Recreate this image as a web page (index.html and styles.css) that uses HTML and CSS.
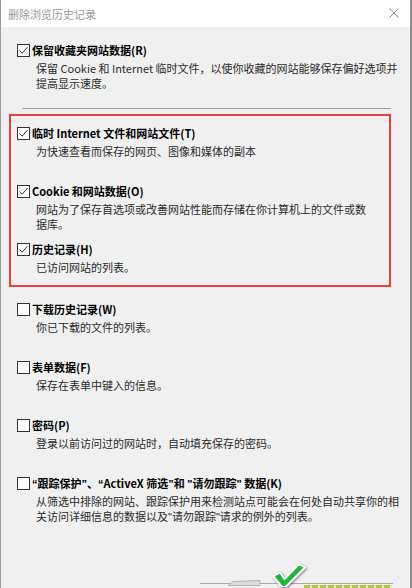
FILE: index.html
```html
<!DOCTYPE html>
<html lang="zh-CN">
<head>
<meta charset="utf-8">
<title>删除浏览历史记录</title>
<link rel="stylesheet" href="styles.css">
</head>
<body>
<div class="window">
  <div class="titlebar">
    <span class="title">删除浏览历史记录</span>
    <svg class="close" width="10" height="10" viewBox="0 0 10 10"><path d="M0.5 0.5 L9.5 9.5 M9.5 0.5 L0.5 9.5" stroke="#8a8a8a" stroke-width="1" fill="none"/></svg>
  </div>
  <div class="content">
    <div class="item first">
      <div class="label-row"><svg class="cb" width="13" height="13" viewBox="0 0 13 13"><rect x="0.5" y="0.5" width="12" height="12" fill="#fff" stroke="#333"/><path d="M2.6 6.4 L5.2 9.2 L10.4 3.2" stroke="#333" stroke-width="1" fill="none"/></svg><span class="label">保留收藏夹网站数据(R)</span></div>
      <div class="desc">保留 Cookie 和 Internet 临时文件，以使你收藏的网站能够保存偏好选项并<br>提高显示速度。</div>
    </div>
    <div class="sep"></div>
    <div class="highlight">
      <div class="item">
        <div class="label-row"><svg class="cb" width="13" height="13" viewBox="0 0 13 13"><rect x="0.5" y="0.5" width="12" height="12" fill="#fff" stroke="#333"/><path d="M2.6 6.4 L5.2 9.2 L10.4 3.2" stroke="#333" stroke-width="1" fill="none"/></svg><span class="label">临时 Internet 文件和网站文件(T)</span></div>
        <div class="desc">为快速查看而保存的网页、图像和媒体的副本</div>
      </div>
      <div class="item">
        <div class="label-row"><svg class="cb" width="13" height="13" viewBox="0 0 13 13"><rect x="0.5" y="0.5" width="12" height="12" fill="#fff" stroke="#333"/><path d="M2.6 6.4 L5.2 9.2 L10.4 3.2" stroke="#333" stroke-width="1" fill="none"/></svg><span class="label">Cookie 和网站数据(O)</span></div>
        <div class="desc">网站为了保存首选项或改善网站性能而存储在你计算机上的文件或数<br>据库。</div>
      </div>
      <div class="item auto">
        <div class="label-row"><svg class="cb" width="13" height="13" viewBox="0 0 13 13"><rect x="0.5" y="0.5" width="12" height="12" fill="#fff" stroke="#333"/><path d="M2.6 6.4 L5.2 9.2 L10.4 3.2" stroke="#333" stroke-width="1" fill="none"/></svg><span class="label">历史记录(H)</span></div>
        <div class="desc">已访问网站的列表。</div>
      </div>
    </div>
    <div class="item after-box">
      <div class="label-row"><svg class="cb" width="13" height="13" viewBox="0 0 13 13"><rect x="0.5" y="0.5" width="12" height="12" fill="#fff" stroke="#333"/></svg><span class="label">下载历史记录(W)</span></div>
      <div class="desc">你已下载的文件的列表。</div>
    </div>
    <div class="item">
      <div class="label-row"><svg class="cb" width="13" height="13" viewBox="0 0 13 13"><rect x="0.5" y="0.5" width="12" height="12" fill="#fff" stroke="#333"/></svg><span class="label">表单数据(F)</span></div>
      <div class="desc">保存在表单中键入的信息。</div>
    </div>
    <div class="item">
      <div class="label-row"><svg class="cb" width="13" height="13" viewBox="0 0 13 13"><rect x="0.5" y="0.5" width="12" height="12" fill="#fff" stroke="#333"/></svg><span class="label">密码(P)</span></div>
      <div class="desc">登录以前访问过的网站时，自动填充保存的密码。</div>
    </div>
    <div class="item">
      <div class="label-row"><svg class="cb" width="13" height="13" viewBox="0 0 13 13"><rect x="0.5" y="0.5" width="12" height="12" fill="#fff" stroke="#333"/></svg><span class="label"><span class="q">“</span>跟踪保护<span class="q">”</span>、<span class="q">“</span>ActiveX 筛选<span class="q">”</span>和 <span class="q">"</span>请勿跟踪<span class="q">"</span> 数据(K)</span></div>
      <div class="desc">从筛选中排除的网站、跟踪保护用来检测站点可能会在何处自动共享你的相<br>关访问详细信息的数据以及<span class="q">"</span>请勿跟踪<span class="q">"</span>请求的例外的列表。</div>
    </div>
  </div>
  <div class="footer">
    <div class="btnbar">
      <svg class="ghost" width="34" height="6" viewBox="0 0 34 6"><path d="M1 5.5 L6 1.5 L33 0.5 L33 5.5 Z" fill="#dcdcdc" stroke="#b4b4b4" stroke-width="1"/></svg>
      <span class="okband"></span>
    </div>
    <svg class="tick" width="38" height="26" viewBox="0 0 38 26"><path d="M3 15 L10 11.5 L14.5 18 L29 3 L35 6.5 L15.5 26 L12 26 Z" fill="#21b33f" stroke="#fff" stroke-width="2" stroke-linejoin="round"/></svg>
  </div>
</div>
</body>
</html>
```
FILE: styles.css
```css
html, body {
  margin: 0;
  padding: 0;
}
body {
  width: 412px;
  height: 588px;
  overflow: hidden;
  background: #f0f0f0;
  font-family: "Noto Sans CJK SC", "Liberation Sans", sans-serif;
}
.window {
  box-sizing: border-box;
  width: 412px;
  height: 588px;
  display: flex;
  flex-direction: column;
  background: #f0f0f0;
  border-left: 1px solid #9a9a9a;
  border-right: 2px solid #8c8c8c;
  position: relative;
}
.titlebar {
  height: 27px;
  flex: none;
  background: #fff;
  display: flex;
  align-items: center;
  justify-content: space-between;
  padding: 0 11px 0 7px;
}
.title {
  font-size: 11px;
  color: #9a9a9a;
  line-height: 14px;
}
.close {
  display: block;
  margin-top: -1px;
}
.content {
  flex: 1;
  padding: 15px 0 0 16px;
}
.item {
  height: 58px;
}
.item.first, .item.auto {
  height: auto;
}
.item.after-box {
  margin-top: 14px;
}
.label-row {
  display: flex;
  align-items: center;
  height: 16px;
}
.cb {
  display: block;
  flex: none;
  margin-right: 2px;
}
.label {
  font-size: 11px;
  font-weight: 700;
  color: #000;
  line-height: 16px;
  white-space: nowrap;
}
.q {
  font-family: "Liberation Sans", sans-serif;
}
.desc {
  margin-top: 3px;
  padding-left: 19px;
  font-size: 11px;
  line-height: 15px;
  color: #2a2a2a;
  white-space: nowrap;
}
.sep {
  margin: 17px 0 0 5px;
  width: 369px;
  height: 1px;
  background: #a0a0a0;
}
.highlight {
  margin: 5px 0 0 -8px;
  width: 382px;
  box-sizing: border-box;
  border: 2px solid #e8403a;
  padding: 9px 0 10px 6px;
}
.footer {
  flex: none;
  height: 5px;
  position: relative;
}
.btnbar {
  margin-left: 199px;
  width: 193px;
  height: 4px;
  border-top: 1px solid #a9a9a9;
  position: relative;
}
.ghost {
  position: absolute;
  left: 27px;
  top: -4px;
}
.okband {
  position: absolute;
  left: 104px;
  top: 1px;
  width: 88px;
  height: 3px;
  background: repeating-linear-gradient(90deg, #b8c43c 0 6px, #e6e9c0 6px 8px);
}
.tick {
  position: absolute;
  left: 269px;
  top: -22px;
  filter: drop-shadow(1px 1px 1px rgba(0,0,0,0.45));
}
```
